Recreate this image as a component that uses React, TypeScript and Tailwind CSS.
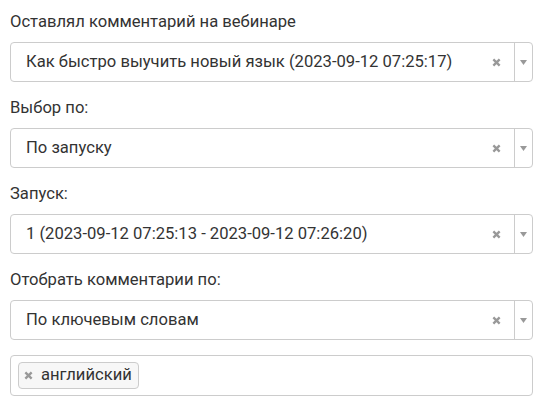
import React from 'react';

interface SelectProps {
  label: string;
  value: string;
}

function ClearIcon() {
  return (
    <svg width="9" height="9" viewBox="0 0 10 10" className="text-[#999]">
      <path d="M1.5 1.5 L8.5 8.5 M8.5 1.5 L1.5 8.5" stroke="currentColor" strokeWidth="2.6" strokeLinecap="butt" />
    </svg>
  );
}

function Select({ label, value }: SelectProps) {
  return (
    <div className="flex flex-col">
      <label className="text-[16.6px] leading-[20px] text-[#333] mb-[10px]">{label}</label>
      <div className="flex h-[40px] items-center rounded-[4px] border border-[#ccc] bg-white">
        <span className="flex-1 pl-[15px] text-[16.6px] text-[#333] truncate">{value}</span>
        <span className="flex w-[36px] items-center justify-center">
          <ClearIcon />
        </span>
        <span className="flex h-full w-[18px] items-center justify-center border-l border-[#ccc]">
          <svg width="7" height="5" viewBox="0 0 7 5">
            <path d="M0 0 L7 0 L3.5 5 Z" fill="#999" />
          </svg>
        </span>
      </div>
    </div>
  );
}

export default function App() {
  const fields = [
    { label: 'Оставлял комментарий на вебинаре', value: 'Как быстро выучить новый язык (2023-09-12 07:25:17)' },
    { label: 'Выбор по:', value: 'По запуску' },
    { label: 'Запуск:', value: '1 (2023-09-12 07:25:13 - 2023-09-12 07:26:20)' },
    { label: 'Отобрать комментарии по:', value: 'По ключевым словам' },
  ];

  return (
    <div className="bg-white px-[10px] pt-[12px] font-['Roboto',sans-serif] w-[543px] h-[410px]">
      <div className="flex flex-col gap-[16px]">
        {fields.map((f) => (
          <Select key={f.label} label={f.label} value={f.value} />
        ))}
      </div>
      <div className="mt-[15px] flex h-[41px] items-center rounded-[4px] border border-[#ccc] bg-white px-[7px]">
        <span className="flex h-[27px] items-center gap-[8px] rounded-[4px] border border-[#ccc] bg-[#f7f7f7] pl-[5px] pr-[6px] text-[16.6px] text-[#333]">
          <ClearIcon />
          английский
        </span>
      </div>
    </div>
  );
}
